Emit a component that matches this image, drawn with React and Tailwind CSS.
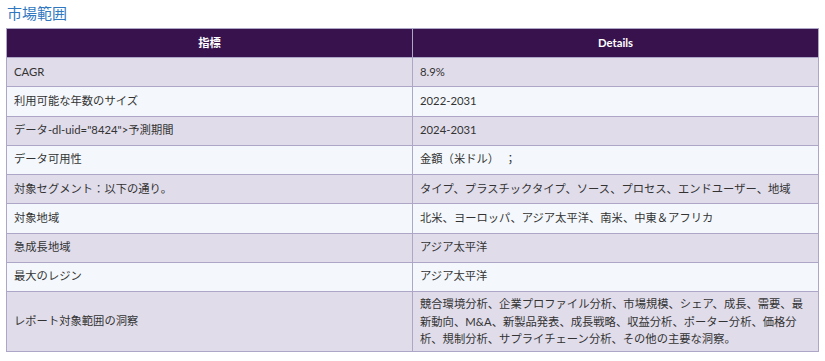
const rows = [
  ["CAGR", "8.9%"],
  ["利用可能な年数のサイズ", "2022-2031"],
  ["データ-dl-uid=\"8424\">予測期間", "2024-2031"],
  ["データ可用性", "金額（米ドル）　；"],
  ["対象セグメント：以下の通り。", "タイプ、プラスチックタイプ、ソース、プロセス、エンドユーザー、地域"],
  ["対象地域", "北米、ヨーロッパ、アジア太平洋、南米、中東＆アフリカ"],
  ["急成長地域", "アジア太平洋"],
  ["最大のレジン", "アジア太平洋"],
];

const insight =
  "競合環境分析、企業プロファイル分析、市場規模、シェア、成長、需要、最新動向、M&A、新製品発表、成長戦略、収益分析、ポーター分析、価格分析、規制分析、サプライチェーン分析、その他の主要な洞察。";

const App = () => {
  return (
    <div className="w-[825px] h-[361px] bg-white px-[6px] font-['Lato','Noto_Sans_CJK_JP',sans-serif] text-[#333] overflow-hidden">
      <h2 className="pt-[3px] mb-[5px] leading-[20px] text-[15px] text-[#2f78bf] pl-px">
        市場範囲
      </h2>

      <div className="w-[813px] border border-[#aea6c6] text-[11.3px]">
        <div className="grid grid-cols-[405px_1fr] h-[28px] bg-[#37124d] text-white font-bold">
          <div className="flex items-center justify-center">指標</div>
          <div className="flex items-center justify-center border-l border-[#aea6c6]">
            Details
          </div>
        </div>

        {rows.map(([label, value], i) => (
          <div
            key={label}
            className={`grid grid-cols-[405px_1fr] h-[29.25px] border-t border-[#aea6c6] ${
              i % 2 === 0 ? "bg-[#e0dcea]" : "bg-[#f4f8fc]"
            }`}
          >
            <div className="flex items-center px-[7px]">{label}</div>
            <div className="flex items-center px-[7px] border-l border-[#aea6c6]">
              {value}
            </div>
          </div>
        ))}

        <div className="grid grid-cols-[405px_1fr] h-[60px] border-t border-[#aea6c6] bg-[#e0dcea]">
          <div className="flex items-center px-[7px]">レポート対象範囲の洞察</div>
          <div className="flex items-center px-[7px] border-l border-[#aea6c6] leading-[17.5px]">
            {insight}
          </div>
        </div>
      </div>
    </div>
  );
};

export default App;
